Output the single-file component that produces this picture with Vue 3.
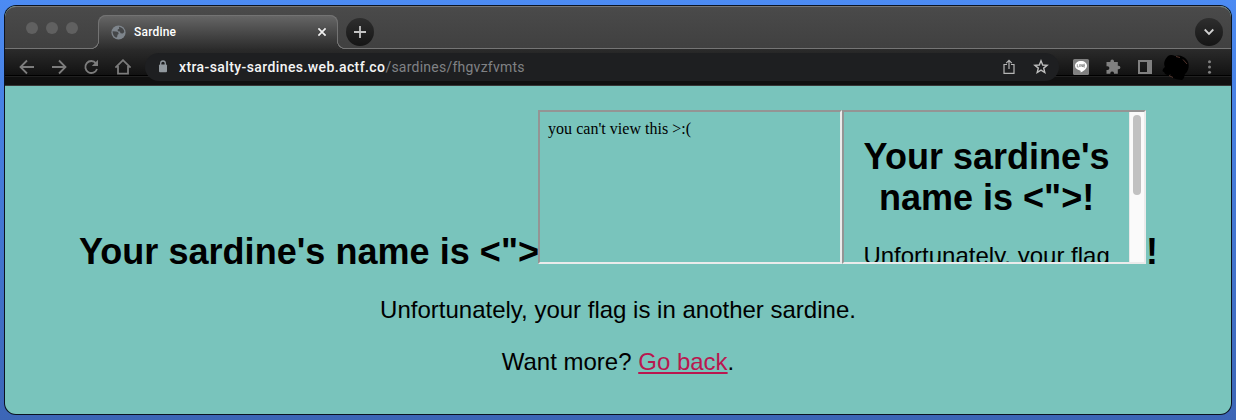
<script setup>
const lights = [1, 2, 3]
</script>

<template>
  <div class="desktop">
    <div class="window">
      <header class="strip">
        <div class="lights"><i v-for="n in lights" :key="n"></i></div>
        <div class="tab">
          <div class="outline"></div>
          <svg class="globe" width="15" height="15" viewBox="0 0 15 15">
            <circle cx="7.5" cy="7.5" r="7.1" fill="#7e858c" />
            <path d="M1.600 6.200 L5 6.400 Q7.800 6.600 7.600 9 L6.500 9.800 L6.300 11.500 L5.300 12.700 Q1.500 11 1.600 6.200Z M8 1.700 Q12.800 2.500 13.300 7 L11.800 8.600 L9.600 8.200 L8.800 6.600 L6.800 6.200 L6.700 4.600 L8.200 3.800Z" fill="#454749" />
          </svg>
          <span class="title">Sardine</span>
          <svg class="close" width="10" height="10" viewBox="0 0 10 10"><path d="M1.4 1.4 8.6 8.6M8.6 1.4 1.4 8.6" stroke="#f1f1f1" stroke-width="1.7" /></svg>
        </div>
        <div class="round plus">
          <svg width="12" height="12" viewBox="0 0 12 12"><path d="M6 0V12M0 6H12" stroke="#c4c4c4" stroke-width="1.8" /></svg>
        </div>
        <div class="round chevron">
          <svg width="12" height="8" viewBox="0 0 12 8"><path d="M1.7 1.5 6 5.9 10.3 1.5" fill="none" stroke="#d0d0d0" stroke-width="1.8" /></svg>
        </div>
      </header>

      <nav class="toolbar">
        <div class="nav-icons">
          <svg width="16" height="16" viewBox="0 0 16 16"><path d="M15 8H2M8 1.5 1.5 8 8 14.5" /></svg>
          <svg width="16" height="16" viewBox="0 0 16 16"><path d="M1 8H14M8 1.5 14.5 8 8 14.5" /></svg>
          <svg width="16" height="16" viewBox="0 0 16 16"><path d="M13 4.2A6 6 0 1 0 14 10" /><path d="M15 .8V7H8.8Z" class="solid" /></svg>
          <svg class="home" width="18" height="16" viewBox="0 0 18 16"><path d="M1.4 8.6 9 1.2 16.6 8.6M4 7V14.7H14V7" /></svg>
        </div>
        <div class="address">
          <svg class="lock" width="10" height="13" viewBox="0 0 10 13"><rect x="1" y="4.5" width="8" height="7.7" rx="1" fill="#92999f" /><path d="M2.7 5V3.3A2.3 2.3 0 0 1 7.3 3.3V5" fill="none" stroke="#92999f" stroke-width="1.3" /></svg>
          <span class="url"><b>xtra-salty-sardines.web.actf.co</b><span>/sardines/fhgvzfvmts</span></span>
          <svg class="share" width="12" height="16" viewBox="0 0 12 16"><path d="M4 5.5H1V14.3H11V5.5H8M6 10V1.5M3.2 4.2 6 1.4 8.8 4.2" fill="none" stroke="#b5b5b5" stroke-width="1.2" /></svg>
          <svg class="star" width="16" height="16" viewBox="0 0 16 16"><path d="M8 1.8 9.7 6 14.1 6.3 10.7 9.1 11.8 13.5 8 11.1 4.2 13.5 5.3 9.1 1.9 6.3 6.3 6Z" fill="none" stroke="#bdbdbd" stroke-width="1.4" /></svg>
        </div>
        <svg class="actions" width="168" height="34" viewBox="0 0 168 34">
          <rect x="11" y="7" width="16" height="16" rx="1.5" fill="#808080" />
          <path d="M19 9C15.6 9 13 11.1 13 13.8C13 16.2 15.2 18 18 18.5C18.8 18.7 18.7 19.3 18.6 20.5C21 19.4 25 17.1 25 13.8C25 11.1 22.4 9 19 9Z" fill="#fff" />
          <path d="M15.3 12.2V15H16.7M17.7 12.2V15M18.9 15V12.2L20.6 15V12.2M23 12.2H21.7V15H23M21.7 13.6H23" fill="none" stroke="#777" stroke-width=".7" />
          <path d="M45 10H48.4V9.3A1.8 1.8 0 0 1 52 9.3V10H55.8V13.7H56.6A1.8 1.8 0 0 1 56.6 17.3H55.8V21.8H52V20.9A1.9 1.9 0 0 0 48.3 20.9V21.8H44.5V18H45.5A1.9 1.9 0 0 0 45.5 14.2H44.5V10Z" fill="#808080" />
          <path d="M77 9H89V21H77Z" fill="none" stroke="#808080" stroke-width="2" /><path d="M85 8H90V22H85Z" fill="#808080" />
          <path d="M106 4C108 2.500 111 3 113 4C117 2.500 122 4 125 8C128 12 127 19 123 22C122 24 123 26 120 28C117 28 112 27 109 25V22C106 24 103 23 102 20C100 20 100 17 103 15C101 11 103 7 106 4Z" fill="#000" />
          <path d="M114 4.500 118 5.500M121 7.500 125 12M107 23.500 111 25.500" stroke="#52342d" stroke-width="1" />
          <circle cx="147.500" cy="9.800" r="1.500" fill="#808080" /><circle cx="147.500" cy="15" r="1.500" fill="#808080" /><circle cx="147.500" cy="20.200" r="1.500" fill="#808080" />
        </svg>
      </nav>

      <main>
        <h1 class="headline">
          <span class="head-text">Your sardine's name is &lt;"&gt;</span>
          <div class="frame denied">you can't view this &gt;:(</div>
          <div class="frame nested">
            <div class="nested-body">
              <h1>Your sardine's<br />name is &lt;"&gt;!</h1>
              <p>Unfortunately, your flag</p>
            </div>
            <div class="track"><div class="thumb"></div></div>
          </div>
          <span class="head-text bang">!</span>
        </h1>
        <p>Unfortunately, your flag is in another sardine.</p>
        <p>Want more? <a>Go back</a>.</p>
      </main>
    </div>
  </div>
</template>

<style>
body { margin: 0; overflow: hidden; }
</style>

<style scoped>
* { box-sizing: border-box; }
.desktop { width: 1236px; height: 420px; padding: 6px 5px; background: linear-gradient(#4c8bf3, #3c66b6); overflow: hidden; }
.window { width: 1226px; height: 408px; border-radius: 11px; overflow: hidden; background: #79c4bc; box-shadow: 0 0 0 1px #0b1320; font-family: "Liberation Sans", Arial, sans-serif; }
.strip { display: flex; height: 43px; background: linear-gradient(#4a4a4a, #404040); border-top: 1px solid #777; border-radius: 11px 11px 0 0; box-shadow: inset 0 -1px #757575; }
.lights { display: flex; gap: 8px; padding: 15px 0 0 21px; width: 93px; }
.lights i { width: 12px; height: 12px; border-radius: 50%; background: #606060; }
.tab { position: relative; display: flex; align-items: center; width: 240px; height: 34px; margin-top: 8px; padding: 0 12px 0 13px; border-radius: 8px 8px 0 0; background: linear-gradient(#676767, #2c2c2c); }
.outline { position: absolute; left: 0; right: 0; top: 0; height: 26px; border: 1px solid #737373; border-bottom: 0; border-radius: 8px 8px 0 0; }
.tab::before, .tab::after { content: ""; position: absolute; bottom: 0; width: 8px; height: 8px; }
.tab::before { left: -7px; background: radial-gradient(circle at 0 0, #414141 6.8px, #757575 7.2px, #757575 7.8px, #2f2f2f 8.2px); }
.tab::after { right: -7px; background: radial-gradient(circle at 100% 0, #414141 6.8px, #757575 7.2px, #757575 7.8px, #2f2f2f 8.2px); }
.title { margin-left: 8px; font: 500 12px Roboto, sans-serif; color: #fff; letter-spacing: .2px; }
.close { margin-left: auto; margin-right: -1px; margin-top: -1px; }
.round { display: flex; align-items: center; justify-content: center; width: 28px; height: 28px; margin-top: 11px; border-radius: 50%; background: linear-gradient(#2e2e2e, #151515); }
.plus { margin-left: 8px; }
.chevron { margin-left: auto; margin-right: 8px; }
.toolbar { display: flex; height: 37px; padding-top: 3px; background: linear-gradient(#2b2b2b 0, #121212 26px, #000 26px, #000 27px, #202020 27px, #202020 28px, #101010 28px, #101010 36px, #373737 36px); }
.nav-icons { display: flex; gap: 16px; width: 140px; height: 30px; padding-left: 14px; align-items: center; }
.nav-icons svg { fill: none; stroke: #7c7c7c; stroke-width: 1.8; flex: none; }
.nav-icons .home { margin-left: -1px; }
.nav-icons .solid { fill: #7c7c7c; stroke: none; }
.address { display: flex; align-items: center; flex: none; width: 914px; height: 28px; margin-top: 1px; padding: 0 10px 0 13px; border-radius: 14px; background: #1e1f21; }
.lock { margin-top: -2px; }
.url { margin-left: 11px; font: 14px Roboto, sans-serif; color: #808285; white-space: nowrap; letter-spacing: .24px; }
.url b { color: #f4f4f4; font-weight: 500; letter-spacing: .4px; }
.share { margin-left: auto; margin-right: 18px; }
.actions { flex: none; margin-left: 3px; }
main { padding-top: 24px; text-align: center; color: #000; }
.headline { display: flex; justify-content: center; align-items: flex-end; margin: 0; height: 154px; font-size: 36px; line-height: 41px; white-space: nowrap; }
.head-text { margin-bottom: -8px; letter-spacing: .04px; }
.head-text:first-child { margin-left: 1px; margin-right: -1px; }
.frame { flex: none; width: 304px; height: 154px; border: 2px solid; border-color: #949494 #ebebeb #ebebeb #949494; overflow: hidden; }
.denied { padding: 8px; text-align: left; font: 16px/18px "Liberation Serif", serif; letter-spacing: .02px; }
.nested { display: flex; }
.nested-body { flex: 1; height: 150px; overflow: hidden; }
.nested-body h1 { margin: 24px 0; font-size: 36px; line-height: 41px; }
.nested-body p { margin: 0; font-weight: 400; }
.track { width: 15px; padding: 3px 3px 0 3px; background: #fafafa; border-left: 1px solid #e8e8e8; }
.thumb { width: 8px; height: 80px; border-radius: 4px; background: #c1c1c1; }
p { font-size: 24px; line-height: 28px; margin: 24px 0 0; }
.headline + p { margin-top: 32px; }
a { color: #b9174f; text-decoration: underline; text-decoration-thickness: 2px; text-underline-offset: 2px; }
</style>
